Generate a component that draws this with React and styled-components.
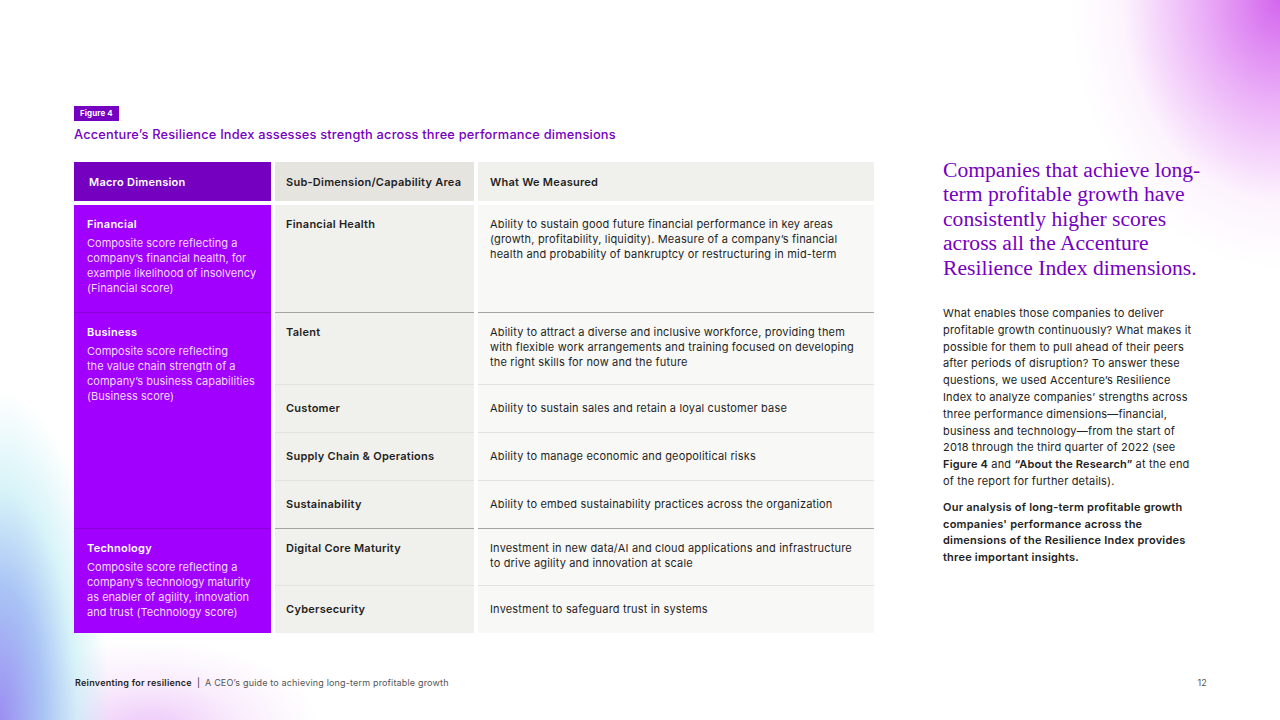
import React from 'react';
import styled, { createGlobalStyle } from 'styled-components';

const GlobalStyle = createGlobalStyle`
  html, body {
    margin: 0;
    padding: 0;
    background: #fff;
  }
  * {
    box-sizing: border-box;
  }
`;

const Page = styled.div`
  width: 1280px;
  height: 720px;
  overflow: hidden;
  display: flex;
  flex-direction: column;
  padding: 106px 0 0 74px;
  font-family: Inter, 'Liberation Sans', sans-serif;
  letter-spacing: 0.17px;
  color: #1f1f1f;
  background:
    radial-gradient(ellipse 210px 270px at 100% 0%, #d466ee 0%, rgba(226, 140, 244, 0.65) 40%, rgba(246, 210, 250, 0.25) 75%, rgba(255, 255, 255, 0) 100%),
    radial-gradient(ellipse 110px 330px at 0% 100%, #9c8ef2 0%, #a9c4f5 40%, rgba(190, 236, 244, 0.6) 70%, rgba(255, 255, 255, 0) 100%),
    radial-gradient(ellipse 170px 90px at 150px 730px, rgba(236, 196, 248, 0.95) 0%, rgba(244, 220, 250, 0.5) 55%, rgba(255, 255, 255, 0) 100%),
    #fff;
`;

const Content = styled.div`
  display: flex;
  gap: 69px;
`;

const FigureColumn = styled.section`
  width: 800px;
  display: flex;
  flex-direction: column;
`;

const FigureTag = styled.span`
  align-self: flex-start;
  background: #7500c0;
  color: #fff;
  font-size: 8px;
  font-weight: 700;
  line-height: 15px;
  padding: 0 6px;
  letter-spacing: 0.1px;
`;

const FigureTitle = styled.h2`
  margin: 6px 0 0;
  color: #7500c0;
  font-size: 12.8px;
  font-weight: 500;
  line-height: 16px;
  letter-spacing: 0.2px;
`;

const Table = styled.div`
  margin-top: 19px;
  display: flex;
  flex-direction: column;
  gap: 4px;
`;

const HeaderRow = styled.div`
  display: grid;
  grid-template-columns: 197px 199px 396px;
  column-gap: 4px;
  height: 39px;
`;

const HeaderCell = styled.div`
  display: flex;
  align-items: center;
  padding-left: ${(p) => p.$pad || 12}px;
  background: ${(p) => p.$bg};
  color: ${(p) => p.$color || '#1f1f1f'};
  font-size: 11px;
  font-weight: 600;
  letter-spacing: 0.25px;
`;

const Group = styled.div`
  display: grid;
  grid-template-columns: 197px 1fr;
  column-gap: 4px;
`;

const MacroCell = styled.div`
  background: #a100ff;
  padding: 12px 8px 0 13px;
  border-top: ${(p) => (p.$first ? 'none' : '1px solid #8800d6')};
`;

const MacroName = styled.div`
  color: #fff;
  font-size: 11px;
  font-weight: 600;
  line-height: 15px;
  letter-spacing: 0.25px;
  margin-bottom: 4px;
`;

const MacroText = styled.div`
  color: #f4d9ff;
  font-size: 11px;
  line-height: 15px;
  letter-spacing: 0.02px;

  span {
    display: block;
    white-space: nowrap;
  }
`;

const SubList = styled.div`
  display: flex;
  flex-direction: column;
`;

const SubRow = styled.div`
  display: grid;
  grid-template-columns: 199px 396px;
  column-gap: 4px;
  height: ${(p) => p.$h}px;
`;

const SubCell = styled.div`
  display: flex;
  align-items: ${(p) => (p.$top ? 'flex-start' : 'center')};
  padding: ${(p) => (p.$top ? '12px' : '0')} 12px 0 ${(p) => p.$pad}px;
  background: ${(p) => p.$bg};
  border-top: ${(p) =>
    p.$line === 'strong' ? '1px solid #a5a5a2' : p.$line === 'soft' ? '1px solid #e2e2de' : 'none'};
  font-size: 11px;
  line-height: 15px;
  font-weight: ${(p) => (p.$bold ? 600 : 400)};
  letter-spacing: ${(p) => (p.$bold ? '0.25px' : '0.17px')};
  color: #1f1f1f;
`;

const SideColumn = styled.aside`
  width: 258px;
  padding-top: 52px;
`;

const Lead = styled.h1`
  margin: 0;
  font-family: 'Liberation Serif', 'Times New Roman', serif;
  font-weight: 400;
  font-size: 21.6px;
  line-height: 24.4px;
  letter-spacing: 0;
  color: #7500c0;
`;

const Paragraph = styled.p`
  margin: ${(p) => (p.$first ? '25px' : '9px')} 0 0;
  font-size: 11px;
  line-height: 16.8px;
  font-weight: ${(p) => (p.$bold ? 600 : 400)};
  letter-spacing: ${(p) => (p.$bold ? '0.22px' : '0.17px')};
  color: #222;

  strong {
    font-weight: 600;
  }
`;

const Footer = styled.footer`
  margin-top: auto;
  width: 1133px;
  padding: 0 0 32px 1px;
  display: flex;
  justify-content: space-between;
  align-items: center;
  font-size: 9px;
  color: #555;
`;

const FooterTitle = styled.span`
  strong {
    color: #1f1f1f;
    font-weight: 600;
    letter-spacing: 0.25px;
  }
`;

const Sep = styled.span`
  margin: 0 5px;
  color: #1f1f1f;
`;

const groups = [
  {
    name: 'Financial',
    lines: [
      'Composite score reflecting a',
      'company’s financial health, for',
      'example likelihood of insolvency',
      '(Financial score)',
    ],
    rows: [
      {
        sub: 'Financial Health',
        what: 'Ability to sustain good future financial performance in key areas (growth, profitability, liquidity). Measure of a company’s financial health and probability of bankruptcy or restructuring in mid-term',
        h: 107,
        top: true,
      },
    ],
  },
  {
    name: 'Business',
    lines: [
      'Composite score reflecting',
      'the value chain strength of a',
      'company’s business capabilities',
      '(Business score)',
    ],
    rows: [
      {
        sub: 'Talent',
        what: 'Ability to attract a diverse and inclusive workforce, providing them with flexible work arrangements and training focused on developing the right skills for now and the future',
        h: 72,
        top: true,
      },
      { sub: 'Customer', what: 'Ability to sustain sales and retain a loyal customer base', h: 48 },
      { sub: 'Supply Chain & Operations', what: 'Ability to manage economic and geopolitical risks', h: 48 },
      { sub: 'Sustainability', what: 'Ability to embed sustainability practices across the organization', h: 48 },
    ],
  },
  {
    name: 'Technology',
    lines: [
      'Composite score reflecting a',
      'company’s technology maturity',
      'as enabler of agility, innovation',
      'and trust (Technology score)',
    ],
    rows: [
      {
        sub: 'Digital Core Maturity',
        what: 'Investment in new data/AI and cloud applications and infrastructure to drive agility and innovation at scale',
        h: 57,
        top: true,
      },
      { sub: 'Cybersecurity', what: 'Investment to safeguard trust in systems', h: 48 },
    ],
  },
];

const App = () => {
  return (
    <>
      <GlobalStyle />
      <Page>
        <Content>
          <FigureColumn>
            <FigureTag>Figure 4</FigureTag>
            <FigureTitle>
              Accenture’s Resilience Index assesses strength across three performance dimensions
            </FigureTitle>
            <Table>
              <HeaderRow>
                <HeaderCell $bg="#7500c0" $color="#fff" $pad={15}>Macro Dimension</HeaderCell>
                <HeaderCell $bg="#e5e4df" $pad={11}>Sub-Dimension/Capability Area</HeaderCell>
                <HeaderCell $bg="#f0f0ec" $pad={12}>What We Measured</HeaderCell>
              </HeaderRow>
              <div>
                {groups.map((g, gi) => (
                  <Group key={g.name}>
                    <MacroCell $first={gi === 0}>
                      <MacroName>{g.name}</MacroName>
                      <MacroText>
                        {g.lines.map((l) => (
                          <span key={l}>{l}</span>
                        ))}
                      </MacroText>
                    </MacroCell>
                    <SubList>
                      {g.rows.map((r, ri) => {
                        const line = ri === 0 ? (gi === 0 ? 'none' : 'strong') : 'soft';
                        return (
                          <SubRow key={r.sub} $h={r.h}>
                            <SubCell $bg="#f0f0ec" $pad={11} $bold $top={r.top} $line={line}>
                              {r.sub}
                            </SubCell>
                            <SubCell $bg="#f8f8f6" $pad={12} $top={r.top} $line={line}>
                              {r.what}
                            </SubCell>
                          </SubRow>
                        );
                      })}
                    </SubList>
                  </Group>
                ))}
              </div>
            </Table>
          </FigureColumn>
          <SideColumn>
            <Lead>
              Companies that achieve long-
              <br />
              term profitable growth have
              <br />
              consistently higher scores
              <br />
              across all the Accenture
              <br />
              Resilience Index dimensions.
            </Lead>
            <Paragraph $first>
              What enables those companies to deliver profitable growth continuously? What makes it
              possible for them to pull ahead of their peers after periods of disruption? To answer
              these questions, we used Accenture’s Resilience Index to analyze companies’ strengths
              across three performance dimensions—financial, business and technology—from the start
              of 2018 through the third quarter of 2022 (see <strong>Figure 4</strong> and{' '}
              <strong>“About the Research”</strong> at the end of the report for further details).
            </Paragraph>
            <Paragraph $bold>
              Our analysis of long-term profitable growth companies' performance across the
              dimensions of the Resilience Index provides three important insights.
            </Paragraph>
          </SideColumn>
        </Content>
        <Footer>
          <FooterTitle>
            <strong>Reinventing for resilience</strong>
            <Sep>|</Sep>A CEO’s guide to achieving long-term profitable growth
          </FooterTitle>
          <span>12</span>
        </Footer>
      </Page>
    </>
  );
};

export default App;
